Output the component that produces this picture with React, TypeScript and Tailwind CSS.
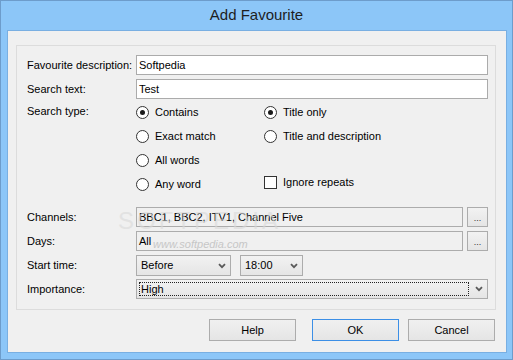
import React from 'react'

const Radio = ({ checked, label }: { checked?: boolean; label: string }) => (
  <div className="h-[24px] flex items-center gap-[6px]">
    <span className="w-[13px] h-[13px] rounded-full border border-[#333333] bg-white flex items-center justify-center">
      {checked && <span className="w-[5px] h-[5px] rounded-full bg-[#1a1a1a]" />}
    </span>
    <span>{label}</span>
  </div>
)

const Chevron = () => (
  <svg width="8" height="6" viewBox="0 0 8 6">
    <path d="M1 1.2 L4 4.2 L7 1.2" fill="none" stroke="#5a5a5a" strokeWidth="1.8" />
  </svg>
)

const Select = ({ value, w }: { value: string; w: string }) => (
  <div
    className={`${w} h-[21px] border border-[#acacac] bg-gradient-to-b from-[#f2f2f2] to-[#e5e5e5] flex items-center justify-between pl-[4px] pr-[4px]`}
  >
    <span>{value}</span>
    <Chevron />
  </div>
)

const Label = ({ children }: { children: React.ReactNode }) => (
  <div className="w-[109px] shrink-0">{children}</div>
)

const DotsButton = () => (
  <div className="w-[21px] h-[20px] ml-[4px] border border-[#acacac] bg-gradient-to-b from-[#f2f2f2] to-[#e5e5e5] flex items-end justify-center pb-[3px] text-[9px] leading-none text-[#333]">
    ...
  </div>
)

export default function App() {
  return (
    <div className="w-[513px] h-[360px] bg-[#8cc6f8] border border-[#6d9ccb] flex flex-col font-['Liberation_Sans',Arial,sans-serif] text-[11px] text-black">
      <div className="h-[29px] flex items-center justify-center text-[15px] text-[#1e1e1e]">
        Add Favourite
      </div>

      <div className="ml-[6px] mr-[5px] mb-[6px] flex-1 bg-[#f0f0f0] border border-[#79afe2] flex flex-col">
        {/* group box */}
        <div className="relative ml-[8px] mr-[10px] mt-[14px] h-[265px] border border-[#dcdcdc] pl-[10px] pr-[7px] pt-[9px]">
          <div className="h-[20px] flex items-center">
            <Label>Favourite description:</Label>
            <div className="flex-1 h-full border border-[#ababab] bg-white flex items-center pl-[2px]">
              Softpedia
            </div>
          </div>

          <div className="h-[20px] mt-[4px] flex items-center">
            <Label>Search text:</Label>
            <div className="flex-1 h-full border border-[#ababab] bg-white flex items-center pl-[2px]">
              Test
            </div>
          </div>

          <div className="mt-[1px] flex">
            <div className="w-[109px] shrink-0 h-[24px] flex items-center -mt-[1px]">Search type:</div>
            <div className="w-[128px]">
              <Radio checked label="Contains" />
              <Radio label="Exact match" />
              <Radio label="All words" />
              <Radio label="Any word" />
            </div>
            <div>
              <Radio checked label="Title only" />
              <Radio label="Title and description" />
              <div className="h-[24px]" />
              <div className="h-[24px] flex items-center gap-[6px] -mt-[2px]">
                <span className="w-[13px] h-[13px] border border-[#333333] bg-white" />
                <span>Ignore repeats</span>
              </div>
            </div>
          </div>

          <div className="h-[20px] mt-[11px] flex items-center">
            <Label>Channels:</Label>
            <div className="flex-1 h-full border border-[#acacac] bg-[#f0f0f0] flex items-center pl-[2px]">
              BBC1, BBC2, ITV1, Channel Five
            </div>
            <DotsButton />
          </div>

          <div className="h-[20px] mt-[4px] flex items-center">
            <Label>Days:</Label>
            <div className="flex-1 h-full border border-[#acacac] bg-[#f0f0f0] flex items-center pl-[2px]">
              All
            </div>
            <DotsButton />
          </div>

          <div className="h-[21px] mt-[4px] flex items-center">
            <Label>Start time:</Label>
            <Select value="Before" w="w-[95px]" />
            <div className="w-[9px]" />
            <Select value="18:00" w="w-[63px]" />
          </div>

          <div className="h-[20px] mt-[3px] flex items-center">
            <Label>Importance:</Label>
            <div className="flex-1 h-full border border-[#acacac] bg-gradient-to-b from-[#f2f2f2] to-[#e5e5e5] flex items-stretch">
              <div className="flex-1 ml-[2px] my-[2px] border border-dotted border-[#222] flex items-center pl-[1px]">
                High
              </div>
              <div className="w-[18px] flex items-center justify-center pl-[1px]">
                <Chevron />
              </div>
            </div>
          </div>

          {/* watermark */}
          <span className="pointer-events-none absolute left-[101px] top-[157px] text-[24px] tracking-[3px] text-[#dadada] opacity-60">
            SOFTPEDIA
          </span>
          <span className="pointer-events-none absolute left-[136px] top-[190px] text-[11px] italic text-[#bdbdbd] opacity-80">
            www.softpedia.com
          </span>
        </div>

        {/* buttons */}
        <div className="mt-[9px] flex justify-end pr-[11px]">
          <button className="w-[87px] h-[22px] border border-[#acacac] bg-gradient-to-b from-[#f0f0f0] to-[#e5e5e5] text-[11px]">
            Help
          </button>
          <button className="w-[87px] h-[22px] ml-[16px] border border-[#3c8fe6] bg-gradient-to-b from-[#f0f0f0] to-[#e5e5e5] text-[11px]">
            OK
          </button>
          <button className="w-[87px] h-[22px] ml-[9px] border border-[#acacac] bg-gradient-to-b from-[#f0f0f0] to-[#e5e5e5] text-[11px]">
            Cancel
          </button>
        </div>
      </div>
    </div>
  )
}
